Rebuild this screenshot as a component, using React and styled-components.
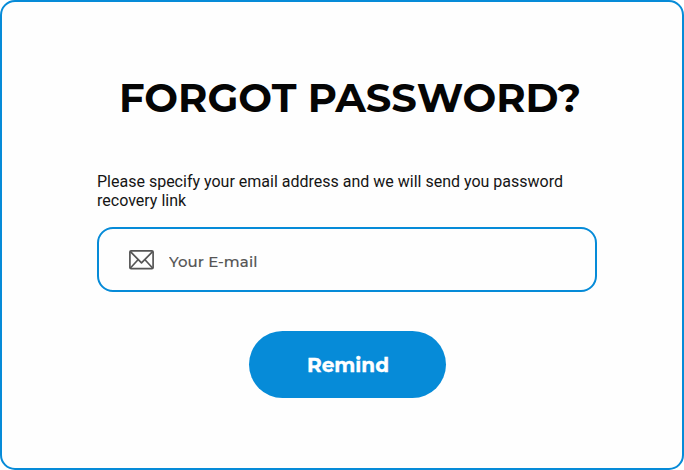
import React from "react";
import styled, { createGlobalStyle } from "styled-components";

const BLUE = "#068bd8";

const GlobalStyle = createGlobalStyle`
  *, *::before, *::after { box-sizing: border-box; }
  body { margin: 0; background: #fff; }
`;

const Card = styled.main`
  width: 684px;
  height: 470px;
  padding: 68px 85px 0 95px;
  border: 2px solid ${BLUE};
  border-radius: 15px;
  background: #fefefe;
`;

const Form = styled.form`
  display: flex;
  flex-direction: column;
  width: 500px;
`;

const Title = styled.h1`
  margin: 0 0 0 22px;
  font: 700 40px/56px Montserrat, Inter, sans-serif;
  white-space: nowrap;
  color: #050505;
`;

const Hint = styled.label`
  margin-top: 46px;
  font: 400 16px/19px Roboto, sans-serif;
  color: #151515;
`;

const Field = styled.div`
  display: flex;
  align-items: center;
  gap: 15px;
  height: 65px;
  margin-top: 17px;
  padding: 0 30px;
  border: 2px solid ${BLUE};
  border-radius: 16px;
`;

const EnvelopeIcon = styled.svg`
  flex: none;
  width: 25px;
  height: 20px;
  fill: none;
  stroke: #555;
  stroke-width: 1.7;
  stroke-linejoin: round;
`;

const EmailInput = styled.input`
  flex: 1;
  min-width: 0;
  height: 30px;
  margin-top: 4px;
  padding: 0;
  border: 0;
  outline: 0;
  background: transparent;
  color: #555;
  font: 500 15px/20px Montserrat, Inter, sans-serif;
  letter-spacing: 0.1px;
  -webkit-text-stroke: 0.15px;
  &::placeholder { color: #555; opacity: 1; }
`;

const SubmitButton = styled.button`
  align-self: center;
  width: 197px;
  height: 67px;
  margin: 39px 0 0 1px;
  padding: 0 0 0 1px;
  border: 0;
  border-radius: 34px;
  background: ${BLUE};
  color: #fff;
  font: 700 20px/24px Montserrat, Inter, sans-serif;
  -webkit-text-stroke: 0.35px #fff;
`;

export default function App() {
  return (
    <>
      <GlobalStyle />
      <Card>
        <Form onSubmit={(event) => event.preventDefault()}>
          <Title>FORGOT PASSWORD?</Title>
          <Hint htmlFor="email">
            Please specify your email address and we will send you password recovery link
          </Hint>
          <Field>
            <EnvelopeIcon viewBox="0 0 25 20" aria-hidden="true">
              <rect x="0.9" y="0.9" width="23.2" height="17.8" rx="1.2" />
              <path d="M1.2 1.4 L12.5 12.9 L23.8 1.4 M1.2 18.3 L9 9.8 M23.8 18.3 L16 9.8" />
            </EnvelopeIcon>
            <EmailInput id="email" type="email" placeholder="Your E-mail" />
          </Field>
          <SubmitButton type="submit">Remind</SubmitButton>
        </Form>
      </Card>
    </>
  );
}
